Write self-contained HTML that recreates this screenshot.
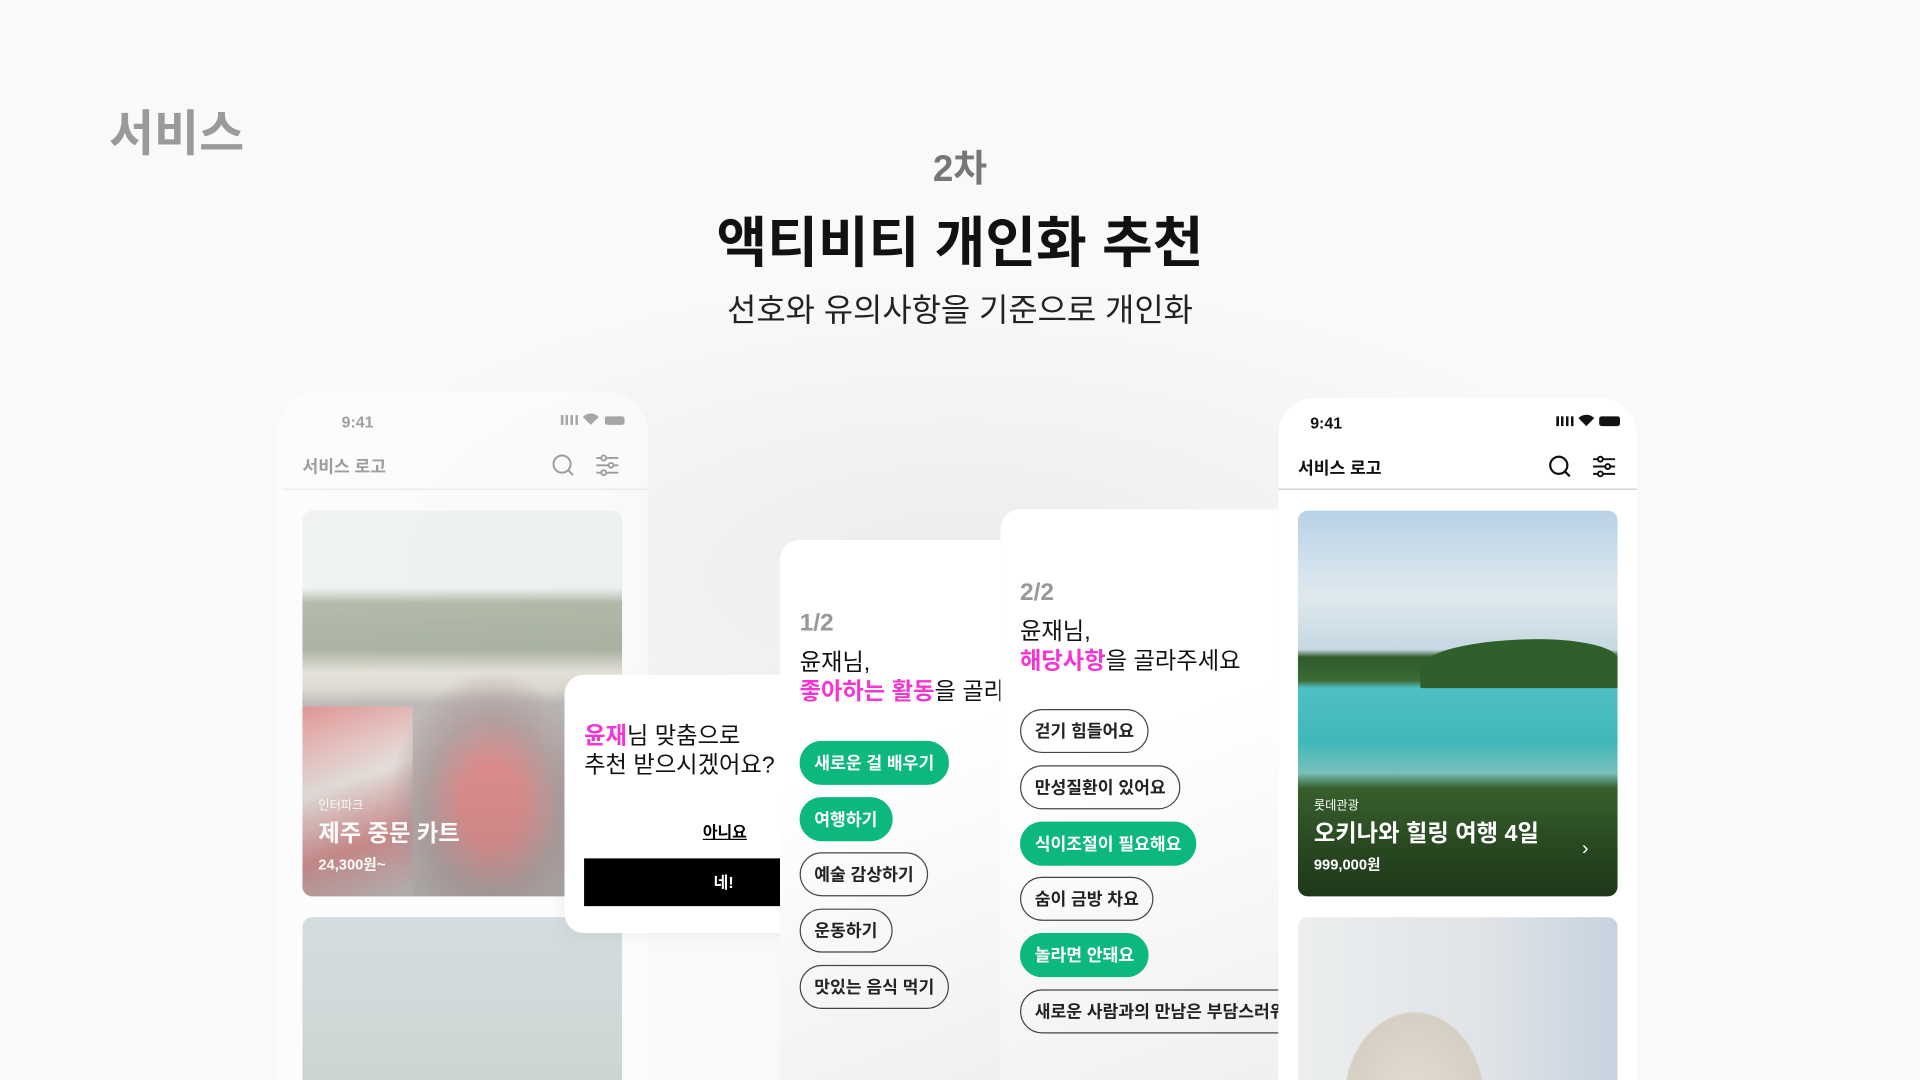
<!DOCTYPE html>
<html><head><meta charset="utf-8"><style>
*{margin:0;padding:0;box-sizing:border-box}
body{width:1920px;height:1080px;overflow:hidden;background:#f8f8f8;font-family:"Liberation Sans","Noto Sans CJK KR",sans-serif}
#s{position:absolute;left:0;top:0;width:1568px;height:882px;transform:scale(1.22449);transform-origin:0 0;background:radial-gradient(ellipse 700px 300px at 784px 470px,#ececec,#f9f9f9 80%)}
.a{position:absolute}
.ph{position:absolute;background:#fff;border-radius:34px 34px 0 0;overflow:hidden}
.st{position:absolute;top:18px;font-size:13px;font-weight:600}
.hd{position:absolute;top:52px;font-size:14px;font-weight:700}
.dv{position:absolute;left:4px;right:0;top:79px;height:1px;background:#ddd}
.im{position:absolute;left:16px;width:261px;border-radius:8px;overflow:hidden}
.cap{position:absolute;left:13px;color:#fff}
.card{position:absolute;background:linear-gradient(160deg,#fff 40%,#f0f0f0);border-radius:16px 0 0 0}
.chip{position:absolute;height:36px;border-radius:18px;padding:0 11px;font-size:14px;font-weight:700;line-height:34px;white-space:nowrap}
.g{background:#0db87e;color:#fff;border:1px solid #0db87e}
.o{border:1px solid #444;color:#222;background:transparent}
.pk{color:#f534d2;font-weight:700}
</style></head><body><div id="s">
<div class="a" style="left:89px;top:77px;font-size:40px;font-weight:700;color:#9a9a9a">서비스</div>
<div class="a" style="left:0;width:1568px;top:113px;text-align:center;font-size:30px;font-weight:700;color:#777">2차</div>
<div class="a" style="left:0;width:1568px;top:162px;text-align:center;font-size:45px;font-weight:700;color:#111">액티비티 개인화 추천</div>
<div class="a" style="left:0;width:1568px;top:233px;text-align:center;font-size:26px;color:#222">선호와 유의사항을 기준으로 개인화</div>

<!-- left phone faded -->
<div class="ph" style="left:226px;top:320px;width:303px;height:562px;opacity:.55">
 <div class="st" style="left:53px;top:17px;color:#555">9:41</div>
 <div class="a" style="left:232px;top:19px;width:14px;height:8px;background:linear-gradient(90deg,#666 2px,transparent 2px 4px,#666 4px 6px,transparent 6px 8px,#666 8px 10px,transparent 10px 12px,#666 12px)"></div>
 <svg class="a" style="left:250px;top:17px" width="13" height="10" viewBox="0 0 13 10"><path d="M6.5 10L0 3.5a9 9 0 0 1 13 0z" fill="#666"/></svg>
 <div class="a" style="left:268px;top:20px;width:16px;height:7px;border-radius:2px;background:#666"></div>
 <div class="hd" style="left:21px;top:51px;color:#555">서비스 로고</div>
 <svg class="a" style="left:224px;top:50px" width="20" height="20" viewBox="0 0 20 20" fill="none" stroke="#555" stroke-width="1.6"><circle cx="9" cy="9" r="7"/><path d="M14 14l4 4"/></svg>
 <svg class="a" style="left:260px;top:51px" width="20" height="18" viewBox="0 0 20 18" fill="none" stroke="#555" stroke-width="1.5"><path d="M1 3h18M1 9h18M1 15h18"/><circle cx="7" cy="3" r="2" fill="#fff"/><circle cx="13" cy="9" r="2" fill="#fff"/><circle cx="7" cy="15" r="2" fill="#fff"/></svg>
 <div class="dv"></div>
 <div class="im" style="left:21px;top:97px;height:315px;background:linear-gradient(180deg,#e9eef0 0,#e9eef0 20%,#7b8a6a 24%,#6d7d5d 36%,#d6d0c2 42%,#c9c3b5 46%,#8e8a86 50%,#8a8680 100%)">
  <div class="a" style="left:0;top:160px;width:90px;height:155px;background:linear-gradient(160deg,#c44 0,#d9d0c8 40%,#b33 70%,#999)"></div>
  <div class="a" style="left:70px;top:130px;width:170px;height:185px;background:radial-gradient(ellipse at 50% 60%,#c33 0,#c33 20%,#7a5a58 45%,transparent 70%)"></div>
  <div class="a" style="left:0;top:0;width:100%;height:100%;background:linear-gradient(180deg,transparent 60%,rgba(0,0,0,.25))"></div>
  <div class="cap" style="top:232px;font-size:10px;opacity:.9">인터파크</div>
  <div class="cap" style="top:249px;font-size:19px;font-weight:700">제주 중문 카트</div>
  <div class="cap" style="top:280px;font-size:12px;font-weight:700">24,300원~</div>
 </div>
 <div class="im" style="left:21px;top:429px;height:140px;background:linear-gradient(180deg,#b9c6cc,#a8b8b4)"></div>
</div>

<!-- dialog -->
<div class="a" style="left:461px;top:551px;width:260px;height:211px;background:#fff;border-radius:16px 0 0 16px;box-shadow:-4px 4px 14px rgba(0,0,0,.04)">
 <div class="a" style="left:16px;top:39px;font-size:19px;line-height:24px;color:#111;white-space:nowrap"><span class="pk">윤재</span>님 맞춤으로<br>추천 받으시겠어요?</div>
 <div class="a" style="left:113px;top:118px;font-size:13px;font-weight:700;text-decoration:underline">아니요</div>
 <div class="a" style="left:16px;top:150px;width:228px;height:39px;background:#000;color:#fff;font-size:13px;font-weight:700;text-align:center;line-height:39px">네!</div>
</div>

<!-- card 1/2 -->
<div class="card" style="left:637px;top:441px;width:180px;height:441px;overflow:hidden">
 <div class="a" style="left:16px;top:57px;font-size:20px;font-weight:700;color:#999">1/2</div>
 <div class="a" style="left:16px;top:89px;font-size:19px;line-height:24px;color:#111;white-space:nowrap">윤재님,<br><span class="pk">좋아하는 활동</span>을 골라주</div>
 <div class="chip g" style="left:16px;top:164px">새로운 걸 배우기</div>
 <div class="chip g" style="left:16px;top:210px">여행하기</div>
 <div class="chip o" style="left:16px;top:255px">예술 감상하기</div>
 <div class="chip o" style="left:16px;top:301px">운동하기</div>
 <div class="chip o" style="left:16px;top:347px">맛있는 음식 먹기</div>
</div>

<!-- card 2/2 -->
<div class="card" style="left:817px;top:416px;width:227px;height:466px;overflow:hidden">
 <div class="a" style="left:16px;top:57px;font-size:20px;font-weight:700;color:#999">2/2</div>
 <div class="a" style="left:16px;top:89px;font-size:19px;line-height:24px;color:#111;white-space:nowrap">윤재님,<br><span class="pk">해당사항</span>을 골라주세요</div>
 <div class="chip o" style="left:16px;top:163px">걷기 힘들어요</div>
 <div class="chip o" style="left:16px;top:209px">만성질환이 있어요</div>
 <div class="chip g" style="left:16px;top:255px">식이조절이 필요해요</div>
 <div class="chip o" style="left:16px;top:300px">숨이 금방 차요</div>
 <div class="chip g" style="left:16px;top:346px">놀라면 안돼요</div>
 <div class="chip o" style="left:16px;top:392px">새로운 사람과의 만남은 부담스러워요</div>
</div>

<!-- right phone -->
<div class="ph" style="left:1044px;top:325px;width:293px;height:557px;border-radius:30px 30px 0 0">
 <div class="st" style="left:26px;top:13px;color:#111">9:41</div>
 <div class="a" style="left:227px;top:15px;width:14px;height:8px;background:linear-gradient(90deg,#111 2px,transparent 2px 4px,#111 4px 6px,transparent 6px 8px,#111 8px 10px,transparent 10px 12px,#111 12px)"></div>
 <svg class="a" style="left:245px;top:13px" width="13" height="10" viewBox="0 0 13 10"><path d="M6.5 10L0 3.5a9 9 0 0 1 13 0z" fill="#111"/></svg>
 <div class="a" style="left:262px;top:15px;width:17px;height:8px;border-radius:2px;background:#111"></div>
 <div class="hd" style="left:16px;top:47px;color:#111">서비스 로고</div>
 <svg class="a" style="left:220px;top:46px" width="20" height="20" viewBox="0 0 20 20" fill="none" stroke="#111" stroke-width="1.8"><circle cx="9" cy="9" r="7"/><path d="M14 14l4 4"/></svg>
 <svg class="a" style="left:256px;top:47px" width="20" height="18" viewBox="0 0 20 18" fill="none" stroke="#111" stroke-width="1.6"><path d="M1 3h18M1 9h18M1 15h18"/><circle cx="7" cy="3" r="2" fill="#fff"/><circle cx="13" cy="9" r="2" fill="#fff"/><circle cx="7" cy="15" r="2" fill="#fff"/></svg>
 <div class="dv" style="left:0;top:74px;background:#ccc"></div>
 <div class="im" style="left:16px;top:92px;height:315px;background:linear-gradient(180deg,#b8d2e6 0,#dfe9ef 22%,#c6d8e2 36%,#2f5a2a 38%,#3b6a34 44%,#4fc0c4 46%,#3fb8bb 60%,#7fcfc6 68%,#3d6a30 72%,#2f5528 100%)">
  <div class="a" style="left:100px;top:105px;width:161px;height:40px;border-radius:60% 40% 0 0;background:#2f5f2a"></div>
  <div class="a" style="left:0;top:0;width:100%;height:100%;background:linear-gradient(180deg,transparent 60%,rgba(0,0,0,.35))"></div>
  <div class="cap" style="top:232px;font-size:10px">롯데관광</div>
  <div class="cap" style="top:249px;font-size:19px;font-weight:700">오키나와 힐링 여행 4일</div>
  <div class="cap" style="top:280px;font-size:12px;font-weight:700">999,000원</div>
  <div class="cap" style="left:232px;top:268px;font-size:16px">›</div>
 </div>
 <div class="im" style="left:16px;top:424px;height:140px;background:radial-gradient(ellipse 75px 95px at 95px 150px,#e2ddd4 0,#d6cfc3 75%,transparent 77%),linear-gradient(90deg,#eceeef,#dfe3e7 60%,#c6d3df)"></div>
</div>
</div></body></html>
